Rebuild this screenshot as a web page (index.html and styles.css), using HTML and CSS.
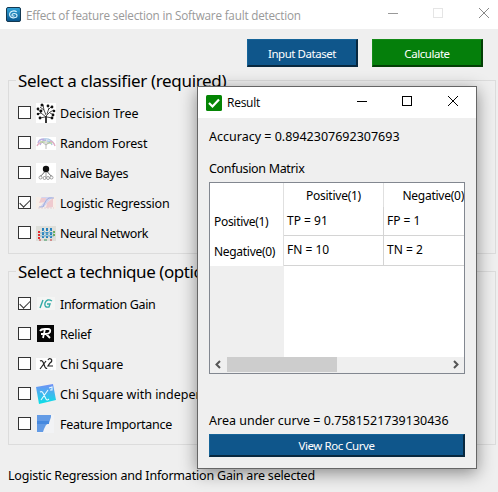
FILE: index.html
```html
<!DOCTYPE html>
<html lang="en">
<head>
<meta charset="utf-8">
<title>Effect of feature selection in Software fault detection</title>
<link rel="stylesheet" href="styles.css">
</head>
<body>
<main class="window">
  <header class="titlebar">
    <svg class="app-icon" width="15" height="15" viewBox="0 0 15 15"><defs><linearGradient id="app" x2="0" y2="1"><stop stop-color="#32a5da"/><stop offset="1" stop-color="#07548d"/></linearGradient></defs><rect x=".5" y=".5" width="14" height="14" rx="1.5" fill="url(#app)" stroke="#143850"/><path d="M10.700 4.700C8 3 3.600 4 3.600 7.500s4.500 4 7 2.600c1.500-3-1.600-4-3.600-3.300-2 1-1 3 1.500 2" fill="none" stroke="#d9f4ff" stroke-width="1.100"/></svg>
    <h1 class="window-title">Effect of feature selection in Software fault detection</h1>
    <svg class="controls" width="102" height="12" viewBox="0 0 102 12" fill="none"><path d="M0 6.500h10" stroke="#999"/><rect x="45.500" y="1.500" width="9" height="9" stroke="#e5e5e5"/><path d="M91 1l10 10M101 1L91 11" stroke="#888"/></svg>
  </header>
  <div class="toolbar"><button class="btn blue">Input Dataset</button><button class="btn green">Calculate</button></div>
  <section class="group">
    <h2><span class="t-classifier">Select a classifier (required)</span></h2>
    <div class="option"><i class="check"></i><svg class="icon" viewBox="0 0 20 20"><path fill="#fff" d="M0 0h20v20H0z"/><g fill="none" stroke="#222" stroke-width=".8"><path stroke-width="1.800" d="M10 20V13"/><path d="M10 14L5 10 2 6M10 13L14 9l4-2M10 12L8 7 7 2M11 11l2-6M5 10L1 11M14 10l4 2M8 7L4 4M12 7l4-4M9 14l-5 1M11 14l5 1"/></g><g fill="#111"><circle cx="2" cy="6" r="1.400"/><circle cx="6" cy="2" r="1.500"/><circle cx="12" cy="3" r="1.400"/><circle cx="16" cy="4" r="1.400"/><circle cx="18" cy="8" r="1.300"/><circle cx="17" cy="12" r="1.400"/><circle cx="2" cy="11" r="1.300"/><circle cx="4" cy="15" r="1.400"/><circle cx="16" cy="15" r="1.400"/><circle cx="5" cy="8" r="1.400"/></g></svg><span>Decision Tree</span></div>
    <div class="option"><i class="check"></i><svg class="icon" viewBox="0 0 20 20"><path fill="#fff" d="M0 4h20v13H0z"/><g fill="none" stroke-width="1.300"><path stroke="#b8afe0" d="M2 10q1-4 6-4M4 12q2-5 6-5"/><path stroke="#a9c8e3" d="M8 6q7-1 10 5M11 8q4 0 5 4"/><path stroke="#e3afc4" d="M1 13q1-3 5-4M14 8q4 1 5 5"/><path stroke="#bdd9a5" d="M4 9h5M11 10h5"/><path stroke="#aaa" d="M10 7v9M10 12L6 9M10 12l4-3" stroke-width=".8"/></g></svg><span class="s15">Random Forest</span></div>
    <div class="option"><i class="check"></i><svg class="icon" viewBox="0 0 20 20"><path fill="#fff" d="M0 0h20v20H0z"/><circle cx="10" cy="6" r="3.200" fill="#111"/><g fill="none" stroke="#888" stroke-width=".8"><path d="M10 9v5M9 9l-4 4M11 9l4 4M8 9q-2 4-4 4M12 9q2 4 4 4"/><circle cx="4.500" cy="14.500" r="1.500"/><circle cx="8.500" cy="15" r="1.500"/><circle cx="12" cy="15" r="1.500"/><circle cx="15.500" cy="14.500" r="1.500"/></g></svg><span class="s25">Naive Bayes</span></div>
    <div class="option"><i class="check on"></i><svg class="icon" viewBox="0 0 20 20"><path fill="#f7eee8" d="M0 4h20v12H0z"/><path fill="#d2d4ef" d="M5 4h12l-4 4-5 6H4l4-5z"/><path fill="#efcacf" d="M5 5h5L9 9l-6 1zM11 10l6-5v9l-7 1z"/><path d="M3 14h4q3-8 6-9h5" stroke="#9eaddd" fill="none"/><path d="M2 15h16" stroke="#ddd3dd" stroke-dasharray="2 1"/></svg><span class="s18">Logistic Regression</span></div>
    <div class="option"><i class="check"></i><svg class="icon" viewBox="0 0 20 20"><path fill="#dedfda" d="M0 3h20v15H0z"/><g fill="none" stroke-width="2"><path stroke="#e42e32" stroke-dasharray="2 1" d="M3 8v8"/><path stroke="#2480bd" stroke-dasharray="3 1" d="M7 5v10M11 5v10M15 5v10"/><path stroke="#6caf57" stroke-dasharray="2 1" d="M18 8v6"/></g><path fill="none" stroke="#5fa6cc" stroke-width=".7" d="M4 10h14M4 13h14M7 7l4 4 4-4M7 14l4-3 4 3"/><path stroke="#c53637" d="M3 17h2M14 17h2"/><path stroke="#36945d" d="M8 17h3"/></svg><span class="s35">Neural Network</span></div>
  </section>
  <section class="group second">
    <h2><span class="t-technique">Select a technique (optional)</span></h2>
    <div class="option"><i class="check on"></i><svg class="icon" viewBox="0 0 20 20"><path fill="#f4f5f4" d="M1 3h18v13H1z"/><path d="M7 6L4 14M16 7q-5-3-7 2-1 5 4 4l1-3h-3" fill="none" stroke="#30aaa5" stroke-width="1.400"/></svg><span class="s35">Information Gain</span></div>
    <div class="option"><i class="check"></i><svg class="icon" viewBox="0 0 20 20"><path fill="#050505" d="M1 1h17v17H1z"/><path d="M4 7q1-2 5-2h3q3 0 2 3-1 2-4 2l4 4M9 5L7 14M5 10h6" fill="none" stroke="#fff" stroke-width="1.800"/></svg><span class="s25">Relief</span></div>
    <div class="option"><i class="check"></i><svg class="icon" viewBox="0 0 20 20"><path fill="#fff" d="M0 4h20v12H0z"/><path d="M4 7q2-1 3 1l2 5q1 2 2 1M10 7l-6 8M12 6q1-2 3-1 2 2-1 4l-2 3h5" fill="none" stroke="#222" stroke-width="1.200"/></svg><span>Chi Square</span></div>
    <div class="option"><i class="check"></i><svg class="icon" viewBox="0 0 20 20"><defs><linearGradient id="chi" x2="0" y2="1"><stop stop-color="#738ff5"/><stop offset="1" stop-color="#08e1e6"/></linearGradient></defs><path fill="url(#chi)" d="M0 3L17 0l3 16-17 4z"/><path d="M4 8q2-1 3 1l3 6q1 2 3 0M12 6L5 16M13 4l3-1v3h-2" fill="none" stroke="#e8faff" stroke-width="1.100"/></svg><span>Chi Square with independence</span></div>
    <div class="option"><i class="check"></i><svg class="icon" viewBox="0 0 20 20"><path fill="#f2f3f5" d="M1 1h17v18H1z"/><path fill="#639be5" d="M1 1h14v2l-1 3-1 3-3 2-2 4-1 3H1z"/><path fill="#4689df" d="M1 7h12v3H1z"/></svg><span class="s25">Feature Importance</span></div>
  </section>
  <footer class="status">Logistic Regression and Information Gain are selected</footer>
</main>
<aside class="dialog">
  <header class="dialog-title">
    <svg width="16" height="16" viewBox="0 0 16 16"><rect width="16" height="16" rx="1.500" fill="#048504"/><path d="M3 8l3.500 3.500L13 4.500" fill="none" stroke="#fff" stroke-width="2.200"/></svg>
    <span>Result</span>
    <svg class="controls" width="102" height="12" viewBox="0 0 102 12" fill="none" stroke="#000"><path d="M0 6.500h10"/><rect x="45.500" y="1.500" width="9" height="9"/><path d="M91 1l10 10M101 1L91 11"/></svg>
  </header>
  <div class="dialog-body">
    <p class="accuracy">Accuracy = 0.8942307692307693</p>
    <p class="caption">Confusion Matrix</p>
    <div class="table">
      <div class="cells">
        <div class="head corner"></div><div class="head">Positive(1)</div><div class="head last">Negative(0)</div>
        <div class="row-head">Positive(1)</div><div class="cell">TP = 91</div><div class="cell last">FP = 1</div>
        <div class="row-head">Negative(0)</div><div class="cell">FN = 10</div><div class="cell last">TN = 2</div>
        <div class="blank"></div>
      </div>
      <div class="scroll"><svg width="17" height="15" viewBox="0 0 17 15"><path d="M10 4L6.500 7.500 10 11" fill="none" stroke="#555" stroke-width="2"/></svg><i></i><svg class="right" width="17" height="15" viewBox="0 0 17 15"><path d="M7 4l3.500 3.500L7 11" fill="none" stroke="#555" stroke-width="2"/></svg></div>
    </div>
    <p class="area">Area under curve = 0.7581521739130436</p>
    <button class="btn blue roc">View Roc Curve</button>
  </div>
</aside>
</body>
</html>
```
FILE: styles.css
```css
* { box-sizing: border-box; }
body { margin: 0; background: #efefef; color: #000; font: 12.5px/18px "Noto Sans", sans-serif; overflow: hidden; white-space: nowrap; }
h1, h2, p { margin: 0; font-weight: normal; }
svg { display: block; flex: none; }
.window { width: 498px; height: 492px; overflow: hidden; }
.titlebar { display: flex; align-items: center; height: 29px; padding: 0 8px 0 6px; background: #fff; color: #999; }
.window-title { margin-left: 5px; padding-top: 1px; font: 11.7px/18px "Open Sans", sans-serif; letter-spacing: -.2px; }
.titlebar .controls { margin: -3px 0 0 auto; }
.toolbar { display: flex; justify-content: flex-end; gap: 14px; padding: 10px 15px 0 0; height: 51px; }
.btn { width: 111px; height: 28px; padding: 2px 0 0; border: 1px solid; border-width: 1px 2px 2px 1px; border-radius: 0; color: #fff; font: 11.5px/20px "Noto Sans", sans-serif; letter-spacing: -.45px; }
.blue { background: #0f568b; border-color: #166499 #08283f #08283f #166499; }
.green { background: #057f0b; border-color: #138a17 #033f05 #033f05 #138a17; }
.group { width: 488px; height: 174px; margin-left: 8px; padding: 0 9px; border: 1px solid #dcdcdc; }
.group h2 { height: 17px; margin-top: -10px; margin-bottom: 10px; font-size: 17px; line-height: 20px; }
.group h2 span { display: inline-block; margin-left: -2px; padding: 0 2px; background: #efefef; }
.group .t-classifier { letter-spacing: -.33px; }
.group .t-technique { letter-spacing: -.45px; }
.second { margin-top: 17px; }
.option { display: flex; align-items: center; height: 30px; }
.option span { padding-top: 2px; }
.check { width: 13px; height: 13px; margin-bottom: 1px; border: 1px solid #333; background: #fff; flex: none; }
.check.on::after { content: ""; display: block; width: 9px; height: 5px; margin: 2px 0 0 1px; border: solid #333; border-width: 0 0 1.500px 1.500px; transform: rotate(-45deg); }
.icon { width: 20px; height: 20px; margin: 0 4px 0 5px; }
.s15 { letter-spacing: -.15px; }
.s18 { letter-spacing: -.18px; }
.s25 { letter-spacing: -.25px; }
.s35 { letter-spacing: -.35px; }
.status { margin: 22px 0 0 8px; letter-spacing: -.19px; }
.dialog { position: absolute; left: 197px; top: 86px; width: 280px; height: 383px; border: 1px solid #666; background: #efefef; box-shadow: 0 4px 16px rgba(0,0,0,.43); }
.dialog-title { display: flex; align-items: center; height: 31px; padding: 0 17px 0 8px; background: #fff; }
.dialog-title span { margin-left: 5px; padding-top: 1px; font: 12px/18px "Open Sans", sans-serif; letter-spacing: -.25px; }
.dialog-title .controls { margin: -3px 0 0 auto; }
.dialog-body { padding: 10px 11px; }
.caption { margin-top: 14px; letter-spacing: -.33px; }
.table { height: 192px; margin-top: 4px; border: 1px solid #828790; background: #fff; overflow: hidden; font-size: 12px; }
.cells { display: grid; grid-template-columns: 74px 100px 80px; grid-template-rows: 24px 29px 30px 91px; height: 174px; overflow: hidden; }
.head { display: flex; align-items: center; justify-content: center; border-right: 1px solid #e0e0e0; padding-top: 2px; letter-spacing: -.25px; }
.head.last { justify-content: flex-end; border-right: 0; }
.cell { padding: 5px 3px; border-right: 1px solid #d4d4d4; border-bottom: 1px solid #d4d4d4; }
.cell.last { border-right: 0; }
.row-head { padding: 6px 4px; border-right: 1px solid #e0e0e0; letter-spacing: -.3px; }
.cell.last + .row-head { padding-top: 7px; }
.blank { background: #efefef; }
.scroll { display: flex; height: 16px; background: #efefef; }
.scroll i { width: 110px; height: 15px; background: #cdcdcd; }
.scroll .right { margin-left: auto; }
.area { margin-top: 38px; }
.roc { display: block; width: 256px; height: 23px; margin-top: 4px; line-height: 18px; }
```
